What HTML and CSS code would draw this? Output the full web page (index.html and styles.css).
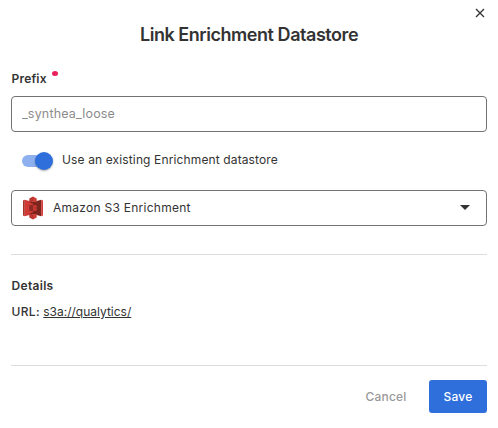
FILE: index.html
```html
<!DOCTYPE html>
<html lang="en">
<head>
<meta charset="utf-8">
<title>Link Enrichment Datastore</title>
<link rel="stylesheet" href="styles.css">
</head>
<body>
<main class="dialog">
  <header class="header">
    <button class="close" aria-label="Close"><svg width="10" height="10" viewBox="0 0 10 10"><path d="M1 1l8 8M9 1L1 9"/></svg></button>
    <h1 class="title">Link Enrichment Datastore</h1>
  </header>
  <label class="label" for="prefix"><span class="label-text">Prefix</span><i class="required"></i></label>
  <input class="field" id="prefix" placeholder="_synthea_loose">
  <div class="toggle-row">
    <span class="switch"></span>
    <span class="toggle-text">Use an existing Enrichment datastore</span>
  </div>
  <div class="field select">
    <svg class="s3" width="20" height="24" viewBox="0 0 20 24">
      <path fill="#a8322b" d="M0 4.6l1.8-.8v16.4L0 19.4z"/>
      <path fill="#d13b35" d="M1.8 3.8L10 6v12l-8.2 2.2z"/>
      <path fill="#7b251f" d="M18.2 3.8L10 6v12l8.2 2.2z"/>
      <path fill="#d13b35" d="M18.2 3.8L20 4.6v14.8l-1.8.8z"/>
      <path fill="#b5342d" d="M10 .5L6.3 2.6v4L10 5.8z"/>
      <path fill="#d13b35" d="M10 .5l3.7 2.1v4L10 5.8z"/>
      <path fill="#b5342d" d="M10 23.5l-3.7-2.1v-4l3.7.8z"/>
      <path fill="#d13b35" d="M10 23.5l3.7-2.1v-4l-3.7.8z"/>
      <path fill="#7b251f" d="M6.3 6.6L10 5.8l3.7.8-3.7.8zM6.3 17.4l3.7-.8 3.7.8-3.7.8z"/>
      <path fill="#8c2b23" d="M6.3 9.3L10 8.8v6.4l-3.7-.5z"/>
      <path fill="#c43731" d="M13.7 9.3L10 8.8v6.4l3.7-.5z"/>
    </svg>
    <span class="select-text">Amazon S3 Enrichment</span>
    <svg class="caret" width="10" height="5" viewBox="0 0 10 5"><path d="M0 0h10L5 5z"/></svg>
  </div>
  <section class="details">
    <h2 class="details-title">Details</h2>
    <p class="url"><span class="url-label">URL:</span> <a class="link">s3a://qualytics/</a></p>
  </section>
  <footer class="footer">
    <button class="cancel">Cancel</button>
    <button class="save">Save</button>
  </footer>
</main>
</body>
</html>
```
FILE: styles.css
```css
* { box-sizing: border-box; }
body { margin: 0; background: #fff; color: #333; font: 12px/20px Inter, sans-serif; letter-spacing: .13px; }
button { border: 0; background: none; padding: 0; font: inherit; letter-spacing: .2px; }
.dialog { display: flex; flex-direction: column; height: 428px; padding: 0 11px 15px; }
.header { position: relative; height: 68px; padding-top: 23px; }
.title { margin: 0; font-size: 18px; line-height: 24px; font-weight: 600; letter-spacing: -.45px; text-align: center; }
.close { position: absolute; top: 8px; right: 2px; width: 10px; height: 10px; display: flex; }
.close path { stroke: #333; stroke-width: 1.3; fill: none; }
.label { display: flex; height: 28px; padding-left: .5px; gap: 5.5px; font-weight: 600; letter-spacing: .2px; }
.label-text { padding-top: 1px; }
.required { width: 6px; height: 5px; margin-top: 3px; border-radius: 50%; background: #e91e5a; }
.field { width: 476px; height: 36px; border: 1px solid #737373; border-radius: 4px; background: #fff; font: 12px/20px Inter, sans-serif; letter-spacing: .26px; }
input.field { padding: 0 10px 1px; outline: 0; font-size: 12.5px; letter-spacing: .17px; }
.field::placeholder { color: #8c8c8c; opacity: 1; }
.toggle-row { display: flex; align-items: center; height: 58px; padding: 0 0 2px 11px; }
.switch { position: relative; width: 30px; height: 12px; margin-top: 2px; border-radius: 6px; background: #8eb0ee; }
.switch::after { content: ""; position: absolute; right: -1px; top: -3px; width: 18px; height: 18px; border-radius: 50%; background: #2f6fdb; box-shadow: 0 1px 2px #0005; }
.toggle-text { margin-left: 10px; }
.select { display: flex; align-items: center; padding: 0 16px 0 11px; }
.select-text { margin-left: 10px; flex: 1; }
.caret { fill: #333; margin-top: -1px; }
.details { margin-top: 28px; height: 111px; border-top: 1px solid #dedede; padding: 21px 0 0 .6px; }
.details-title { margin: 0 0 6px; font-size: 12px; line-height: 20px; font-weight: 600; letter-spacing: .3px; }
.url { margin: 0; letter-spacing: 0; }
.url-label { font-weight: 500; letter-spacing: .3px; }
.link { text-decoration: underline; }
.footer { display: flex; justify-content: flex-end; border-top: 1px solid #dedede; padding-top: 14px; }
.cancel { margin-right: 22.5px; color: #999; font-weight: 500; }
.save { width: 58px; height: 33px; border-radius: 3px; background: #2f6fdb; color: #fff; font-weight: 500; }
```
